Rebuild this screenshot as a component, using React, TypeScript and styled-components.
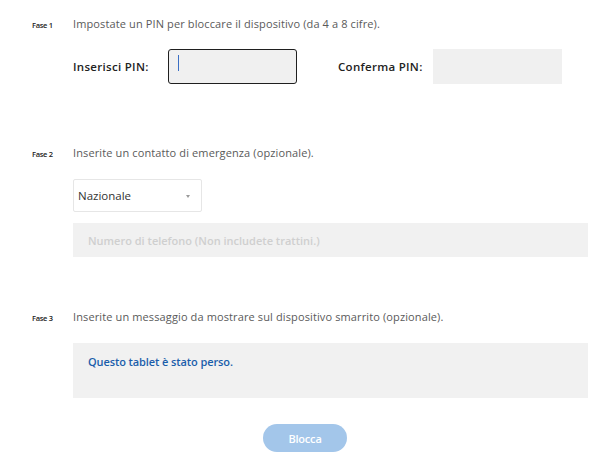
import React from "react";
import styled, { createGlobalStyle } from "styled-components";

const Global = createGlobalStyle`
  html, body { margin: 0; padding: 0; background: #ffffff; }
  body { font-family: "Open Sans", "Liberation Sans", Arial, sans-serif; }
  * { box-sizing: border-box; }
`;

const Page = styled.div`
  width: 610px;
  height: 467px;
  padding-top: 17px;
  display: flex;
  flex-direction: column;
`;

const Step = styled.section<{ $gap: number }>`
  display: flex;
  flex-direction: column;
  margin-top: ${(p) => p.$gap}px;
`;

const StepHead = styled.div`
  display: flex;
  align-items: baseline;
  padding-left: 32px;
  height: 14px;
`;

const StepLabel = styled.span`
  width: 41px;
  font-size: 7.5px;
  font-weight: 600;
  color: #222;
  letter-spacing: -0.3px;
`;

const StepTitle = styled.span`
  font-size: 11px;
  line-height: 14px;
  color: #5a5a5a;
  letter-spacing: 0.12px;
`;

const StepBody = styled.div<{ $gap: number }>`
  margin-left: 73px;
  width: 515px;
  margin-top: ${(p) => p.$gap}px;
  display: flex;
  flex-direction: column;
  gap: 11px;
`;

const PinRow = styled.div`
  display: flex;
  align-items: center;
`;

const FieldLabel = styled.span<{ $offset?: number }>`
  width: 95px;
  margin-left: ${(p) => p.$offset ?? 0}px;
  font-size: 11.5px;
  font-weight: 600;
  color: #222;
  letter-spacing: 0.3px;
`;

const PinBox = styled.div<{ $active?: boolean }>`
  position: relative;
  width: 129px;
  height: 35px;
  background: #f0f0f0;
  border: ${(p) => (p.$active ? "1.5px solid #1f1f1f" : "none")};
  border-radius: ${(p) => (p.$active ? "3px" : "0")};
`;

const Caret = styled.span`
  position: absolute;
  left: 9px;
  top: 5px;
  width: 1px;
  height: 16px;
  background: #3b6fc4;
`;

const Select = styled.div`
  width: 129px;
  height: 33px;
  border: 1px solid #e6e6e6;
  border-radius: 2px;
  background: #fff;
  display: flex;
  align-items: center;
  justify-content: space-between;
  padding: 0 11px 0 4px;
  font-size: 11.5px;
  color: #333;
  letter-spacing: 0;
`;

const Arrow = styled.span`
  width: 0;
  height: 0;
  border-left: 2.5px solid transparent;
  border-right: 2.5px solid transparent;
  border-top: 3px solid #9a9a9a;
  margin-top: 2px;
`;

const GreyField = styled.div<{ $h: number; $color: string; $align: string; $spacing: number }>`
  width: 515px;
  height: ${(p) => p.$h}px;
  background: #f1f1f1;
  display: flex;
  align-items: ${(p) => p.$align};
  padding: 11px 15px 0 15px;
  font-size: 11px;
  font-weight: 600;
  color: ${(p) => p.$color};
  letter-spacing: ${(p) => p.$spacing}px;
`;

const Phone = styled(GreyField)`
  padding-top: 0;
`;

const ButtonRow = styled.div`
  display: flex;
  justify-content: center;
  margin-top: 26px;
`;

const Button = styled.button`
  width: 84px;
  height: 28px;
  border: none;
  border-radius: 14px;
  background: #a3c6ea;
  color: #fff;
  font-family: "Open Sans", "Liberation Sans", Arial, sans-serif;
  font-size: 11px;
  font-weight: 600;
  letter-spacing: -0.2px;
  padding: 0;
`;

export default function App() {
  return (
    <>
      <Global />
      <Page>
        <Step $gap={0}>
          <StepHead>
            <StepLabel>Fase 1</StepLabel>
            <StepTitle>Impostate un PIN per bloccare il dispositivo (da 4 a 8 cifre).</StepTitle>
          </StepHead>
          <StepBody $gap={18}>
            <PinRow>
              <FieldLabel>Inserisci PIN:</FieldLabel>
              <PinBox $active>
                <Caret />
              </PinBox>
              <FieldLabel $offset={41}>Conferma PIN:</FieldLabel>
              <PinBox />
            </PinRow>
          </StepBody>
        </Step>

        <Step $gap={62}>
          <StepHead>
            <StepLabel>Fase 2</StepLabel>
            <StepTitle>Inserite un contatto di emergenza (opzionale).</StepTitle>
          </StepHead>
          <StepBody $gap={19}>
            <Select>
              <span>Nazionale</span>
              <Arrow />
            </Select>
            <Phone $h={34} $color="#cfcfcf" $align="center" $spacing={0}>
              Numero di telefono (Non includete trattini.)
            </Phone>
          </StepBody>
        </Step>

        <Step $gap={53}>
          <StepHead>
            <StepLabel>Fase 3</StepLabel>
            <StepTitle>Inserite un messaggio da mostrare sul dispositivo smarrito (opzionale).</StepTitle>
          </StepHead>
          <StepBody $gap={19}>
            <GreyField $h={55} $color="#1b5eab" $align="flex-start" $spacing={-0.1}>
              Questo tablet è stato perso.
            </GreyField>
          </StepBody>
        </Step>

        <ButtonRow>
          <Button>Blocca</Button>
        </ButtonRow>
      </Page>
    </>
  );
}
